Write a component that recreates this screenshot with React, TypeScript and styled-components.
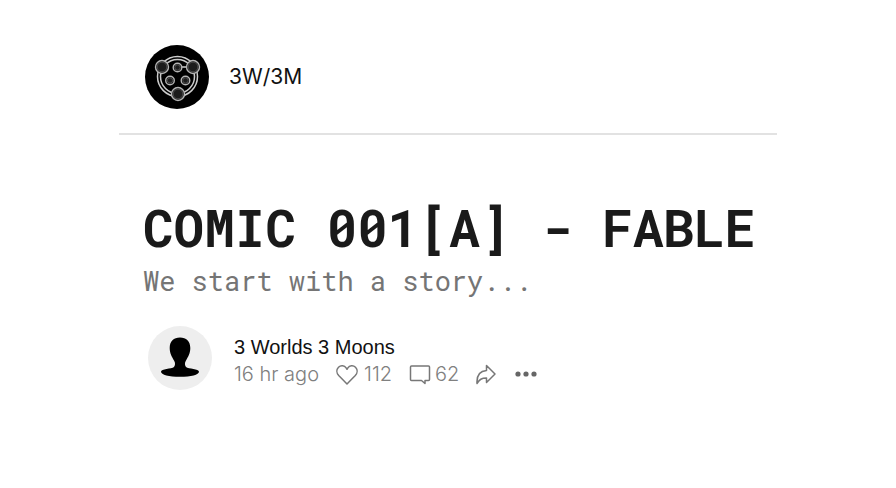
import React from "react";
import styled, { createGlobalStyle } from "styled-components";

const GlobalStyle = createGlobalStyle`
  * { box-sizing: border-box; }
  body {
    margin: 0;
    background: #fff;
    font-family: "Liberation Sans", Arial, sans-serif;
  }
`;

const Page = styled.div`
  max-width: 658px;
  margin: 0 auto;
`;

const Header = styled.header`
  padding: 45px 26px 24px;
  border-bottom: 2px solid #e2e2e2;
`;

const Brand = styled.a`
  display: inline-flex;
  align-items: center;
  gap: 20px;
  color: #111;
  font-family: Inter, "Liberation Sans", sans-serif;
  font-size: 21px;
  line-height: 28px;
  text-decoration: none;
  vertical-align: top;
`;

const Avatar = styled.svg`
  display: block;
  flex: none;
  width: 64px;
  height: 64px;
`;

const Post = styled.main`
  padding: 59px 0 40px 24px;
`;

const Title = styled.h1`
  margin: 0;
  color: #1a1a1a;
  font: 700 51px/68px "Roboto Mono", "DejaVu Sans Mono", monospace;
  white-space: nowrap;
`;

const Subtitle = styled.p`
  margin: 0;
  color: #757575;
  font: 400 27px/38px "Roboto Mono", "DejaVu Sans Mono", monospace;
`;

const Byline = styled.div`
  display: flex;
  align-items: flex-start;
  gap: 22px;
  padding: 26px 5px 0;
`;

const Details = styled.div`
  padding-top: 8px;
`;

const Author = styled.a`
  display: block;
  color: #111;
  font-size: 20px;
  line-height: 27px;
  text-decoration: none;
`;

const Meta = styled.div`
  display: flex;
  align-items: center;
  gap: 17px;
  color: #808080;
  font-family: Inter, "Liberation Sans", sans-serif;
  font-size: 20px;
  font-weight: 300;
  line-height: 27px;
`;

const Action = styled.button<{ $gap?: number }>`
  display: inline-flex;
  align-items: center;
  gap: ${({ $gap = 0 }) => $gap}px;
  padding: 0;
  border: 0;
  background: none;
  color: inherit;
  font: inherit;
  cursor: pointer;
`;

const Icon = styled.svg`
  display: block;
  width: 22px;
  height: 22px;
  fill: none;
  stroke: #777;
  stroke-width: 1.5;
  stroke-linejoin: round;
`;

const rings = [
  { x: 17, y: 22, r: 6.5 },
  { x: 48, y: 22, r: 6.5 },
  { x: 33, y: 49, r: 6.5 },
  { x: 32.5, y: 22.5, r: 4.3 },
  { x: 25, y: 35.5, r: 4.3 },
  { x: 40.5, y: 35.5, r: 4.3 },
];

function BrandMark() {
  return (
    <Avatar viewBox="0 0 64 64" aria-hidden="true">
      <circle cx="32" cy="32" r="32" fill="#000" />
      <g fill="none" stroke="#ccc" strokeWidth="1.5">
        <circle cx="32.5" cy="31.5" r="20" />
        <circle cx="32.5" cy="31.5" r="17" />
        <path d="M36 22h6" />
      </g>
      {rings.map(({ x, y, r }) => (
        <g key={`${x}-${y}`} stroke="#b4b4b4">
          <circle cx={x} cy={y} r={r} fill="#111" strokeWidth="1.4" />
          <circle cx={x} cy={y} r={r - 1.6} fill="#1c1c1c" stroke="#555" strokeWidth="0.9" />
        </g>
      ))}
    </Avatar>
  );
}

function AuthorPortrait() {
  return (
    <Avatar viewBox="0 0 64 64" aria-hidden="true">
      <circle cx="32" cy="32" r="32" fill="#eee" />
      <path d="M32 11.500c6.300 0 10.300 4 10.300 10.500 0 5.500-2.300 9-4.300 12.500-1.500 2.700-1.300 4.500 0 6.500 2.500 2.200 13 1.500 13 4.700 0 3-8 5-19 5s-19-2-19-5c0-3.200 10.500-2.500 13-4.700 1.300-2 1.500-3.800 0-6.500-2-3.500-4.300-7-4.300-12.500 0-6.500 4-10.500 10.300-10.500z" />
    </Avatar>
  );
}

export default function App() {
  return (
    <>
      <GlobalStyle />
      <Page>
        <Header>
          <Brand href="#home">
            <BrandMark />
            3W/3M
          </Brand>
        </Header>
        <Post>
          <Title>COMIC 001[A] - FABLE</Title>
          <Subtitle>We start with a story...</Subtitle>
          <Byline>
            <AuthorPortrait />
            <Details>
              <Author href="#author">3 Worlds 3 Moons</Author>
              <Meta>
                <time>16 hr ago</time>
                <Action aria-label="Like, 112" $gap={6}>
                  <Icon viewBox="0 0 22 22">
                    <path d="M11 20 2.700 11.500C.4 9 .3 5.500 2.500 3.200c2.300-2.300 6-1.800 7.600.7L11 5.300l.9-1.400c1.600-2.500 5.300-3 7.600-.7 2.200 2.300 2.100 5.800-.2 8.300z" />
                  </Icon>
                  112
                </Action>
                <Action aria-label="Comments, 62" $gap={4}>
                  <Icon viewBox="0 0 22 22">
                    <path d="M2.500 2h17q1 0 1 1v12.500q0 1-1 1h-3.500v3L12.500 16.500h-10q-1 0-1-1v-12.500q0-1 1-1z" />
                  </Icon>
                  62
                </Action>
                <Action aria-label="Share">
                  <Icon viewBox="0 0 22 22">
                    <path d="M10.500 1.500 19 10l-8.500 8.500v-4.500c-5 0-7 1.500-9.500 5.500-.5-8 2.500-12.500 9.500-13z" />
                  </Icon>
                </Action>
                <Action aria-label="More options">
                  <Icon viewBox="0 0 22 22">
                    <g fill="#666" stroke="none">
                      <circle cx="3" cy="10" r="2.600" />
                      <circle cx="11" cy="10" r="2.600" />
                      <circle cx="19" cy="10" r="2.600" />
                    </g>
                  </Icon>
                </Action>
              </Meta>
            </Details>
          </Byline>
        </Post>
      </Page>
    </>
  );
}
